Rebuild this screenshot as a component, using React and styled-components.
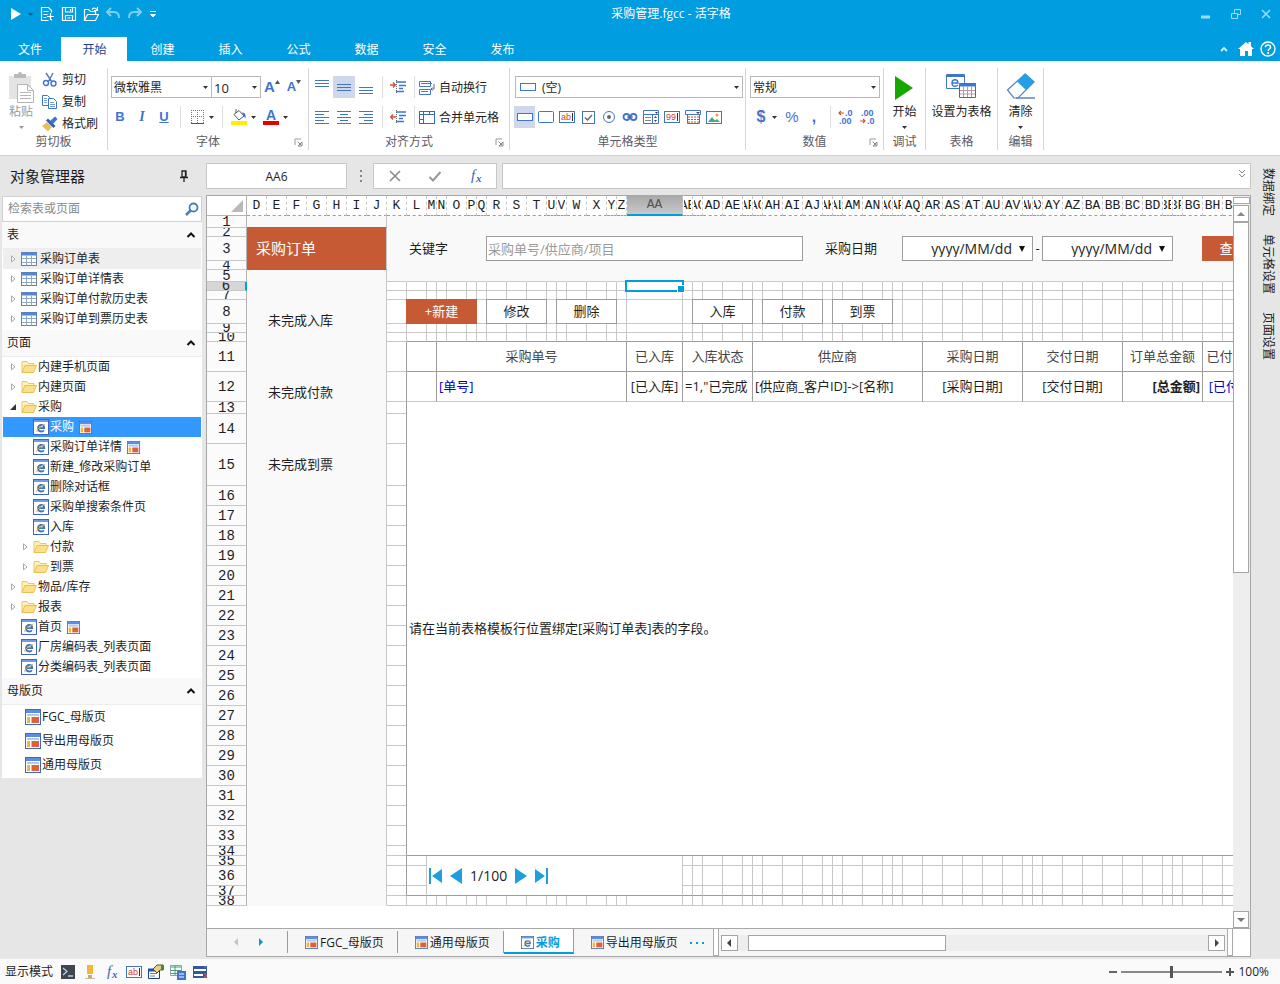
import styled, { createGlobalStyle, css } from 'styled-components';

const colors = {
  brand: '#009de1',
  accent: '#c65a35',
  blue: '#3f74cf',
  panel: '#e6e6e6',
  light: '#f9f9f9',
  line: '#c8c8c8',
  dark: '#9c9c9c',
  text: '#1e1e1e',
};

const GlobalStyle = createGlobalStyle`
  * {
    box-sizing: border-box;
  }
  body {
    margin: 0;
    background: ${colors.panel};
    color: ${colors.text};
    font: 12px/16px 'Open Sans', 'Noto Sans CJK SC', sans-serif;
  }
  button, input, select {
    margin: 0;
    padding: 0;
    border: 0;
    border-radius: 0;
    background: none;
    color: inherit;
    font: inherit;
    outline: none;
  }
  select {
    appearance: none;
  }
  svg {
    display: block;
    flex: none;
  }
  ul {
    margin: 0;
    padding: 0;
    list-style: none;
  }
`;

const St = {
  Page: styled.div`
    display: flex;
    flex-direction: column;
    min-height: 100vh;
  `,

  /* header */
  Header: styled.header`
    background: ${colors.brand};
    color: #fff;
  `,
  TitleRow: styled.div`
    display: flex;
    align-items: center;
    height: 28px;
  `,
  QuickBar: styled.div`
    display: flex;
    align-items: center;
    gap: 6px;
    width: 160px;
    padding-left: 10px;
  `,
  QuickButton: styled.button`
    display: flex;
  `,
  Title: styled.h1`
    flex: 1;
    margin: 0;
    font-size: 12px;
    font-weight: 400;
    text-align: center;
  `,
  WindowControls: styled.div`
    display: flex;
    gap: 20px;
    padding: 0 9px 0 19px;
  `,
  TabRow: styled.nav`
    display: flex;
    align-items: flex-end;
    height: 33px;
  `,
  MenuTab: styled.button`
    width: ${props => (props.$first ? 59 : 66)}px;
    height: 24px;
    margin-right: 2px;
    padding: 2px 0 0 1px;
    background: ${props => (props.$active ? '#fff' : 'transparent')};
    color: ${props => (props.$active ? '#1c3f94' : '#fff')};
  `,
  HeaderTools: styled.div`
    display: flex;
    align-items: center;
    gap: 6px;
    height: 24px;
    margin-left: auto;
    padding-right: 4px;

    & > svg:first-child {
      margin-right: 4px;
    }
  `,

  /* ribbon */
  Ribbon: styled.section`
    display: flex;
    padding: 7px 0 5px;
    border-bottom: 1px solid #cfcfcf;
    background: #fff;
  `,
  Group: styled.div`
    display: flex;
    flex: none;
    flex-direction: column;
    width: ${props => props.$width}px;
    height: 82px;
    border-right: 1px solid #d6d6d6;
  `,
  GroupBody: styled.div`
    flex: 1;
  `,
  GroupLabel: styled.div`
    display: grid;
    grid-template-columns: 1fr auto 1fr;
    align-items: center;
    height: 16px;
    color: #5c5c66;

    & > span {
      grid-column: 2;
      white-space: nowrap;
    }
  `,
  Launcher: styled.button`
    justify-self: end;
    margin-right: 5px;
  `,
  Clipboard: styled.div`
    display: grid;
    grid-template-columns: 42px 1fr;
  `,
  BigButton: styled.button`
    display: grid;
    grid-template-rows: 32px 16px 14px;
    justify-content: center;
    place-items: center;
    width: 100%;
    padding-top: 4px;
    color: ${props => (props.$muted ? '#9a9a9a' : 'inherit')};
    white-space: nowrap;
  `,
  TextButton: styled.button`
    display: flex;
    align-items: center;
    gap: 4px;
    height: 22px;
    padding-top: 1px;
    white-space: nowrap;
  `,
  ToolRow: styled.div`
    display: flex;
    align-items: center;
    height: 22px;
    margin-top: 8px;
    padding-left: ${props => props.$pad}px;
  `,
  IconButton: styled.button`
    display: flex;
    align-items: center;
    justify-content: center;
    width: ${props => props.$width || 22}px;
    height: 22px;
    background: ${props => (props.$active ? '#cfd8ea' : 'transparent')};
    color: ${colors.blue};
    ${props =>
      props.$glyph &&
      css`
        font: ${props.$light ? 400 : 700} ${props.$glyph}px/22px 'Liberation Sans', sans-serif;

        & > svg {
          align-self: flex-start;
          margin-top: 4px;
        }
      `}
    ${props => props.$italic && "font-family: 'Liberation Serif', serif; font-style: italic;"}
    ${props => props.$underline && 'text-decoration: underline;'}
  `,
  SplitButton: styled.button`
    display: flex;
    align-items: center;
    gap: 4px;
    height: 22px;
    padding: 0 3px 0 4px;
  `,
  Spacer: styled.span`
    width: 4px;
  `,
  Sep: styled.span`
    width: 1px;
    height: 22px;
    margin: 0 4px 0 5px;
    background: #dedede;
  `,
  SelectBox: styled.label`
    display: flex;
    align-items: center;
    gap: 6px;
    width: ${props => props.$width}px;
    height: 22px;
    padding: 0 3px 0 ${props => (props.$icon ? 4 : 2)}px;
    border: 1px solid #b9b9b9;
    background: #fff;
    font-size: ${props => props.$size || 12}px;

    & + & {
      border-left: 0;
    }
    select {
      flex: 1;
      min-width: 0;
      height: 20px;
      padding-top: 1px;
    }
  `,

  /* object manager */
  Main: styled.main`
    display: flex;
    flex: 1;
    background: ${colors.panel};
  `,
  Side: styled.aside`
    flex: none;
    width: 206px;
  `,
  SideTitle: styled.h2`
    display: flex;
    align-items: center;
    justify-content: space-between;
    height: 40px;
    margin: 0;
    padding: 0 18px 0 10px;
    font-size: 15px;
    font-weight: 400;
  `,
  SidePanel: styled.div`
    margin: 0 4px 0 2px;
    background: #fff;

    ul {
      padding-bottom: 1px;
    }
  `,
  SearchBox: styled.label`
    display: flex;
    align-items: center;
    height: 26px;
    padding: 0 2px 0 5px;
    border: 1px solid #d0d0d0;

    input {
      flex: 1;
      min-width: 0;
    }
    input::placeholder {
      color: #8a8a8a;
      opacity: 1;
    }
  `,
  SectionHeader: styled.h3`
    display: flex;
    align-items: center;
    justify-content: space-between;
    height: 27px;
    margin: 0;
    padding: 0 6px 0 5px;
    border-bottom: 1px solid #ededed;
    background: ${colors.light};
    font-size: 12px;
    font-weight: 400;
  `,
  TreeItem: styled.li`
    display: flex;
    align-items: center;
    height: 20px;
    margin: 0 1px;
    padding-left: ${props => 6 + (props.$level || 0) * 12}px;
    background: ${props => (props.$selected ? '#3399ff' : props.$hover ? '#eeeeee' : '#fff')};
    color: ${props => (props.$selected ? '#fff' : 'inherit')};

    & > :first-child {
      margin-right: 4px;
    }
    span {
      margin: 0 5px 0 ${props => (props.$table ? 3 : 1)}px;
      white-space: nowrap;
    }
  `,
  NoExpander: styled.i`
    width: 8px;
  `,
  MasterItem: styled.li`
    display: flex;
    align-items: center;
    gap: 1px;
    height: 24px;
    padding-left: 23px;
  `,

  /* formula bar */
  Workspace: styled.section`
    display: flex;
    flex: 1;
    flex-direction: column;
    min-width: 0;
    padding: 7px 0 2px;
  `,
  FormulaBar: styled.div`
    display: flex;
    align-items: center;
    height: 26px;
    margin-bottom: 6px;
  `,
  NameBox: styled.input`
    width: 141px;
    height: 26px;
    border: 1px solid #c6c6c6;
    background: #fff;
    text-align: center;
  `,
  FormulaTools: styled.div`
    display: flex;
    align-items: center;
    gap: 26px;
    width: 124px;
    height: 26px;
    padding-left: 14px;
    border: 1px solid #c6c6c6;
    background: #fff;
  `,
  FormulaInput: styled.label`
    display: flex;
    flex: 1;
    height: 26px;
    margin-left: 5px;
    padding: 5px 4px;
    border: 1px solid #c6c6c6;
    background: #fff;

    input {
      flex: 1;
    }
  `,

  /* sheet */
  Document: styled.div`
    display: flex;
    flex: 1;
    flex-direction: column;
    border: 1px solid #a8a8a8;
    background: #fff;
  `,
  DocumentMain: styled.div`
    display: flex;
    flex: 1;
  `,
  SheetView: styled.div`
    flex: 1;
    min-width: 0;
    overflow: hidden;
  `,
  Table: styled.table`
    width: ${props => props.$width}px;
    border-collapse: separate;
    border-spacing: 0;
    table-layout: fixed;
  `,
  Col: styled.col`
    width: ${props => props.$width}px;
  `,
  Row: styled.tr`
    height: ${props => props.$height}px;
  `,
  Corner: styled.th`
    height: 20px;
    padding: 0 3px 0 24px;
    border-right: 1px solid #b5b5b5;
    border-bottom: 1px solid #b5b5b5;
  `,
  ColHead: styled.th`
    height: 20px;
    padding: 0 1px;
    border-right: 1px dashed ${colors.line};
    border-bottom: ${props => (props.$active ? `2px solid ${colors.brand}` : `1px dashed ${colors.dark}`)};
    background: ${props => (props.$active ? 'linear-gradient(#a9a9a9, #c9c9c9)' : '#fff')};
    color: ${props => (props.$active ? '#555' : 'inherit')};
    font: 13px/16px 'Liberation Mono', monospace;

    & > div {
      display: flex;
      justify-content: center;
      overflow: hidden;
    }
  `,
  RowHead: styled.th`
    padding: 0;
    border-right: ${props => (props.$active ? `2px solid ${colors.brand}` : '1px solid #b5b5b5')};
    border-bottom: 1px solid ${colors.line};
    background: ${props => (props.$active ? '#d6d6d6' : '#fbfbfb')};
    font: 14px/16px 'Liberation Mono', monospace;

    & > div {
      display: flex;
      align-items: center;
      justify-content: center;
      height: ${props => props.$height - 1}px;
      overflow: hidden;
    }
  `,
  Cell: styled.td`
    position: relative;
    padding: ${props => (props.$text ? '0 2px 2px' : 0)};
    border-right: 1px solid ${props => props.$right};
    border-bottom: 1px solid ${props => props.$bottom};
    background: ${props => ({ shade: colors.light, accent: colors.accent })[props.$fill] || '#fff'};
    color: ${props => props.$color || 'inherit'};
    font-size: 13px;
    font-weight: ${props => (props.$bold ? 700 : 400)};
    text-align: ${props => props.$align || 'left'};
    vertical-align: ${props => (props.$top ? 'top' : 'middle')};
    white-space: nowrap;
  `,
  Selection: styled.div`
    position: absolute;
    z-index: 1;
    inset: -2px;
    border: 2px solid ${colors.brand};

    &::after {
      content: '';
      position: absolute;
      right: -3px;
      bottom: -3px;
      width: 6px;
      height: 6px;
      border: 1px solid #fff;
      background: ${colors.brand};
    }
  `,
  MenuTitle: styled.div`
    padding: 0 0 2px 9px;
    color: #fff;
    font-size: 15px;
  `,
  SheetMenu: styled.div`
    display: flex;
    flex-direction: column;
    padding-top: 14px;

    button {
      height: 72px;
      padding-left: 21px;
      text-align: left;
    }
  `,
  KeywordInput: styled.input`
    display: block;
    width: 100%;
    height: 23px;
    padding-left: 1px;
    background: #fff;
    outline: 1px solid ${colors.dark};

    &::placeholder {
      color: #9a9a9a;
      opacity: 1;
    }
  `,
  DateBox: styled.label`
    display: flex;
    align-items: center;
    gap: 6px;
    height: 23px;
    padding-right: 6px;
    background: #fff;
    font-size: 14px;
    outline: 1px solid ${colors.dark};

    select {
      flex: 1;
      min-width: 0;
      text-align-last: right;
    }
  `,
  SheetButton: styled.button`
    display: block;
    width: 100%;
    height: 23px;
    padding-bottom: 2px;
    background: ${props => (props.$primary ? colors.accent : '#fff')};
    color: ${props => (props.$primary ? '#fff' : 'inherit')};
    outline: 1px solid ${props => (props.$primary ? colors.accent : colors.dark)};
  `,
  Pager: styled.div`
    display: flex;
    align-items: center;
    gap: 8px;
    padding-left: 2px;
    font-size: 14px;
  `,

  /* scrollbars and sheet tabs */
  VScroll: styled.div`
    display: flex;
    flex-direction: column;
    width: 17px;
    background: #eeeeee;
  `,
  VSplit: styled.div`
    height: 7px;
    margin: 1px 0;
    border: 1px solid #aaa;
    background: #fff;
  `,
  ScrollButton: styled.button`
    display: flex;
    flex: none;
    align-items: center;
    justify-content: center;
    width: ${props => (props.$small ? 17 : 16)}px;
    height: ${props => (props.$small ? 16 : 17)}px;
    border: 1px solid #a5a5a5;
    background: #fff;
  `,
  VTrack: styled.div`
    flex: 1;
  `,
  VThumb: styled.div`
    width: 16px;
    height: 51%;
    border: 1px solid #a5a5a5;
    background: #fff;
  `,
  SheetTabs: styled.div`
    display: flex;
    height: 28px;
    border-top: 1px solid #a8a8a8;
    background: #f6f6f6;
  `,
  TabNav: styled.div`
    display: flex;
    align-items: center;
    gap: 15px;
    width: 81px;
    height: 22px;
    margin-top: 2px;
    padding-left: 24px;
    border-right: 1px solid ${colors.dark};
  `,
  SheetTab: styled.button`
    display: flex;
    align-items: center;
    gap: 2px;
    height: 22px;
    margin-top: 2px;
    padding: 1px 13px 0 17px;
    border-right: 1px solid ${colors.dark};
    white-space: nowrap;

    &:nth-last-of-type(2) {
      padding-right: 10px;
      border-right: 0;
    }
    ${props =>
      props.$active &&
      css`
        height: 25px;
        margin-top: 0;
        padding-top: 4px;
        border-bottom: 2px solid ${colors.brand};
        background: #fff;
        color: ${colors.brand};
        font-weight: 700;
      `}
  `,
  MoreTabs: styled.button`
    display: flex;
    align-items: center;
    gap: 4px;
    width: 25px;
    padding-left: 2px;

    i {
      width: 2px;
      height: 2px;
      background: ${colors.brand};
    }
  `,
  HSplit: styled.div`
    flex: none;
    width: 6px;
    border: 1px solid #aaa;
    border-top: 0;
    background: #fff;
  `,
  HScroll: styled.div`
    display: flex;
    flex: 1;
    align-items: center;
    padding: 0 2px;
  `,
  HTrack: styled.div`
    flex: 1;
    padding-left: 10px;
    background: #eeeeee;
  `,
  HThumb: styled.div`
    width: 43%;
    height: 16px;
    border: 1px solid #a5a5a5;
    background: #fff;
  `,
  TabsCorner: styled.div`
    flex: none;
    width: 17px;
    background: #fff;
  `,
  Dock: styled.aside`
    display: flex;
    flex: none;
    flex-direction: column;
    align-items: center;
    gap: 18px;
    width: 29px;
    padding: 12px 0 0 5px;

    button {
      text-orientation: sideways;
      writing-mode: vertical-rl;
    }
  `,

  /* status bar */
  Status: styled.footer`
    display: flex;
    align-items: center;
    height: 25px;
    padding: 0 11px 0 5px;
    background: #fafafa;
  `,
  StatusIcons: styled.div`
    display: flex;
    gap: 6px;
    margin-left: 7px;
  `,
  Zoom: styled.div`
    display: flex;
    align-items: center;
    gap: 4px;
    margin-left: auto;

    input {
      width: 101px;
      height: 12px;
      background: linear-gradient(#888, #888) center / 100% 2px no-repeat;
      appearance: none;
    }
    input::-webkit-slider-thumb {
      width: 3px;
      height: 12px;
      background: #555;
      appearance: none;
    }
  `,
};

/* ---------- icons ---------- */

const Svg = ({ w = 16, h = w, box, children }) => (
  <svg width={w} height={h} viewBox={box || `0 0 ${w} ${h}`} fill="none" aria-hidden="true">
    {children}
  </svg>
);

const Caret = ({ color = '#333' }) => (
  <Svg w={5} h={3}>
    <path d="M0 0h5L2.5 3z" fill={color} />
  </Svg>
);

const Triangle = ({ dir = 'right', color = '#444' }) => {
  const d = { right: 'M3 1l4 4-4 4z', left: 'M7 1L3 5l4 4z', up: 'M1 7l4-4 4 4z', down: 'M1 3l4 4 4-4z' };
  return (
    <Svg w={10}>
      <path d={d[dir]} fill={color} />
    </Svg>
  );
};

const PageIcon = ({ size = 16 }) => (
  <Svg w={size} box="0 0 16 16">
    <rect x="0.5" y="0.5" width="15" height="15" fill="#fff" stroke="#3f66c4" />
    <path d="M1 2h14" stroke="#6f9be8" strokeWidth="2" />
    <path d="M5 9.2h6.2c0-2-1.3-3.2-3-3.2S5 7.4 5 9.3s1.4 3.2 3.3 3.2c1.2 0 2-.4 2.6-1.2" stroke="#3f74b8" strokeWidth="1.8" />
    <path d="M4 13c-1-2 3-6 8-7.5" stroke="#e0b040" />
  </Svg>
);

const MasterIcon = ({ size = 16 }) => (
  <Svg w={size} box="0 0 16 16">
    <rect x="0.5" y="0.5" width="15" height="15" fill="#fff" stroke="#3f66c4" />
    <path d="M1 2.5h14" stroke="#5b8fe6" strokeWidth="3" />
    <path d="M2 6h12" stroke="#9ab8e8" strokeWidth="1.5" />
    <path d="M2 8h3v6H2z" fill="#f0b73c" />
    <path d="M6.5 8H14v6H6.5z" fill="#de6238" />
  </Svg>
);

const TableIcon = () => (
  <Svg>
    <rect x="0.5" y="1.5" width="15" height="13" fill="#fff" stroke="#6d7f9c" />
    <path d="M0 3h16" stroke="#4f86d9" strokeWidth="3" />
    <path d="M1 7.5h14M1 11.5h14M5.5 4.5v10M10.5 4.5v10" stroke="#8ea9c0" />
  </Svg>
);

const FolderIcon = () => (
  <Svg>
    <path d="M1 13.5V2.5h5l1.5 2H13v2" fill="#fdf1b8" stroke="#ecc766" />
    <path d="M1 13.5l3-7h11.5l-3 7z" fill="#fbe08b" stroke="#e8bd55" />
  </Svg>
);

const Expander = ({ open }) => (
  <Svg w={8}>
    {open ? <path d="M7 1v6H1z" fill="#333" /> : <path d="M2.5 0.8v6L6 4z" stroke="#a8a8a8" fill="#fff" />}
  </Svg>
);

const Chevron = () => (
  <Svg w={10} h={6}>
    <path d="M1.5 5L5 1.5 8.5 5" stroke="#111" strokeWidth="2" />
  </Svg>
);

const AlignIcon = ({ offset = 2, widths = [14, 14, 14], align = 'center' }) => (
  <Svg>
    {widths.map((w, i) => {
      const x = { left: 1, center: 8 - w / 2, right: 15 - w }[align];
      return <path key={i} d={`M${x} ${offset + i * 3 + 0.5}h${w}`} stroke={colors.blue} />;
    })}
  </Svg>
);

const IndentIcon = ({ out }) => (
  <Svg>
    <path d="M6.5 1v14" stroke="#666" strokeDasharray="1 1" />
    <path d="M6 3h10M9 6.5h7M9 9.5h4M6 12.5h8" stroke={colors.blue} strokeWidth="1.6" />
    <path d={out ? 'M6 8H1M3 5.5L0.8 8 3 10.5' : 'M0 6h5M3 3.5L5.2 6 3 8.5'} stroke="#d4532b" strokeWidth="1.4" />
  </Svg>
);

const WrapIcon = () => (
  <Svg>
    <path d="M.5 1.5h11v5H.5zM.5 9.5h11v5H.5z" stroke={colors.blue} />
    <path d="M2 3.5h11M2 11.5h7" stroke="#d4532b" />
    <path d="M15 4v5h-3M13.5 7.5L12 9l1.5 1.5" stroke="#667" />
  </Svg>
);

const MergeIcon = () => (
  <Svg>
    <rect x="0.5" y="1.5" width="15" height="12" stroke="#3a69b0" />
    <path d="M1 4.5h14M4.5 2v11M10.5 2v2.5M1 9.5h3.5" stroke="#3a69b0" />
  </Svg>
);

const RectIcon = ({ round = 0 }) => (
  <Svg>
    <rect x="0.5" y={round ? 2.5 : 4.5} width="15" height={round ? 11 : 7} rx={round} fill="#fff" stroke={colors.blue} />
  </Svg>
);

const InputIcon = ({ label = 'ab' }) => (
  <Svg>
    <rect x="0.5" y="2.5" width="15" height="11" fill="#fff" stroke={colors.blue} />
    <text x="2" y="11" fontSize="9" fill="#d4422b" fontFamily="Liberation Sans">
      {label}
    </text>
    <path d="M13.5 4v8" stroke="#333" />
  </Svg>
);

const CheckIcon = () => (
  <Svg>
    <rect x="2.5" y="2.5" width="12" height="12" stroke={colors.blue} />
    <path d="M5 8.5l2.5 2.5L12 6" stroke="#667" strokeWidth="1.5" />
  </Svg>
);

const RadioIcon = () => (
  <Svg>
    <circle cx="8" cy="8" r="5.5" stroke={colors.blue} />
    <circle cx="8" cy="8" r="2" fill="#667" />
  </Svg>
);

const LinkIcon = () => (
  <Svg>
    <circle cx="4.5" cy="8" r="3" stroke={colors.blue} strokeWidth="1.8" />
    <circle cx="11.5" cy="8" r="3" stroke={colors.blue} strokeWidth="1.8" />
    <path d="M5 8h6" stroke="#556" />
  </Svg>
);

const ComboIcon = () => (
  <Svg>
    <path d="M.5 1.5h15v4H.5zM.5 5.5v9h9v-9M9.5 5.5h6v9h-6" stroke={colors.blue} />
    <path d="M2 8.5h6M2 11.5h6" stroke="#888" />
    <path d="M11 9h3l-1.5-2zM11 11h3l-1.5 2zM12 3h3l-1.5 2z" fill="#445" />
  </Svg>
);

const CalendarIcon = () => (
  <Svg>
    <path d="M.5 1.5h15v4H.5zM2.5 5.5v9h12v-9" stroke={colors.blue} />
    <path d="M3 8h11M3 10.5h11M3 13h11" stroke="#d4532b" strokeDasharray="2 1" />
    <path d="M11 3h4l-2 2z" fill="#445" />
  </Svg>
);

const ImageIcon = () => (
  <Svg>
    <rect x="0.5" y="2.5" width="15" height="12" fill="#fff" stroke={colors.blue} />
    <path d="M2 13l4-5 3 3.5L11 10l3 3z" fill="#3fae7c" />
    <circle cx="11" cy="6" r="1.5" fill="#e7a23c" />
  </Svg>
);

const DecimalIcon = ({ more }) => (
  <Svg>
    <text x={more ? 7 : 1} y="7" fontSize="9" fontWeight="bold" fill={colors.blue} fontFamily="Liberation Sans">
      {more ? '.0' : '.00'}
    </text>
    <text x={more ? 1 : 7} y="15" fontSize="9" fontWeight="bold" fill={colors.blue} fontFamily="Liberation Sans">
      {more ? '.00' : '.0'}
    </text>
    <path d={more ? 'M6 4H1M3 2L1 4l2 2' : 'M0 12h5M3 10l2 2-2 2'} stroke="#d4532b" strokeWidth="1.2" />
  </Svg>
);

const GrowIcon = ({ down }) => (
  <Svg w={5} h={4}>
    <path d={down ? 'M0 0h5L2.5 4z' : 'M0 4h5L2.5 0z'} fill="#555" />
  </Svg>
);

const ScissorsIcon = () => (
  <Svg>
    <path d="M4 1l6 9M11 1L7 8.5" stroke="#5d7fb8" strokeWidth="1.5" />
    <circle cx="4" cy="11" r="2.5" stroke={colors.blue} strokeWidth="1.4" />
    <circle cx="11.5" cy="11.5" r="2.5" stroke={colors.blue} strokeWidth="1.4" />
    <path d="M6 9.5l2.5-2" stroke={colors.blue} strokeWidth="1.4" />
  </Svg>
);

const CopyIcon = () => (
  <Svg>
    <path d="M.5 1.5h5l2 2v8h-7z" fill="#fff" stroke={colors.blue} />
    <path d="M6.5 4.5h5l3 3v7h-8z" fill="#fff" stroke={colors.blue} />
    <path d="M2 4.5h3M2 6.5h3M2 8.5h3M8 8.5h4M8 10.5h5M8 12.5h5" stroke="#7fa0dc" />
  </Svg>
);

const BrushIcon = () => (
  <Svg>
    <path d="M0 10l5-4 5 5-4 4.500z" fill="#e7bf5d" />
    <path d="M4 4.500l2-2 7.500 7.500-2 2z" fill="#2e5fb5" />
    <path d="M8 5l5-4.500 2.500 2.500L11 8z" fill={colors.blue} />
  </Svg>
);

const PasteIcon = () => (
  <Svg w={26} h={32}>
    <path d="M1 4h22v23H1z" fill="#e4e4e4" />
    <path d="M6 2h4a2 2 0 014 0h4v4H6z" fill="#b9b9b9" />
    <path d="M9.5 12.5h10l6 6v12h-16z" fill="#fff" stroke="#b5b5b5" />
    <path d="M19.5 12.5v6h6M12 20.5h11M12 23.5h11M12 26.5h11" stroke="#b5b5b5" />
  </Svg>
);

const BorderIcon = () => (
  <Svg>
    <path d="M2 1.5h13M2 7.5h13M2.5 1v13M8.5 1v13M14.5 1v13" stroke="#777" strokeDasharray="1 1" />
    <path d="M2 14.5h13" stroke="#555" />
  </Svg>
);

const FillIcon = () => (
  <Svg h={18}>
    <path d="M3 6.5l5-4 5 5.5-5 4z" fill="#fff" stroke="#556" />
    <path d="M5 1v4" stroke="#556" />
    <path d="M11 4.5c3 0 4 2 3.5 6-1-1-2-3-3.5-6z" fill={colors.blue} />
    <path d="M0 13h16v4H0z" fill="#ffee00" />
  </Svg>
);

const FontColorIcon = () => (
  <Svg h={18}>
    <text x="3" y="12" fontSize="14" fontWeight="bold" fill={colors.blue} fontFamily="Liberation Sans">
      A
    </text>
    <path d="M0 13h16v4H0z" fill="#e60000" />
  </Svg>
);

const LauncherIcon = () => (
  <Svg w={9}>
    <path d="M1 7V1h6" stroke="#999" />
    <path d="M3.5 3.5L7 7M8 4v4H4z" stroke="#888" />
  </Svg>
);

const PlayBig = () => (
  <Svg w={20} h={26}>
    <path d="M1 1l18 12L1 25z" fill="#16a800" />
  </Svg>
);

const SetTableIcon = () => (
  <Svg w={32} h={30}>
    <path d="M1.5 1.5h18v14h-18z" fill="#fff" stroke={colors.blue} />
    <path d="M1 3h19" stroke={colors.blue} strokeWidth="2" />
    <path d="M7 10h6c0-2-1.2-3.3-3-3.3S7 8 7 10s1.3 3.3 3.2 3.3c1.2 0 2-.4 2.6-1.2" stroke={colors.blue} strokeWidth="1.4" />
    <path d="M14.5 10.5h16v14h-16z" fill="#fff" stroke="#666" />
    <path d="M14 12h17" stroke={colors.blue} strokeWidth="3" />
    <path d="M15 17.5h15M15 21h15M18.5 14v10M22.5 14v10M26.5 14v10" stroke="#b898a8" />
  </Svg>
);

const EraserIcon = () => (
  <Svg w={30} h={32}>
    <path d="M1.5 18L19 2l9 8-16 16H8z" fill="#fff" stroke="#5582c8" strokeWidth="1.2" />
    <path d="M11 9.5L19.5 1.5l9 8-8.5 8.5z" fill="#25a0e6" />
    <path d="M10 26h19" stroke="#5582c8" strokeWidth="1.5" />
  </Svg>
);

const FxIcon = () => (
  <Svg>
    <text x="3" y="12" fontSize="15" fontStyle="italic" fill="#3d68b5" fontFamily="Liberation Serif">
      f
    </text>
    <text x="8" y="14" fontSize="11" fontStyle="italic" fontWeight="bold" fill="#3d68b5" fontFamily="Liberation Serif">
      x
    </text>
  </Svg>
);

/* ---------- header ---------- */

const quickActions = [
  { label: '新建', d: 'M2.5 1.5h7l3 3v2M2.5 1v13.5h7M12.5 13v1.5M4.5 5.5h5M4.5 8.5h4M4.5 11.5h3M11.5 7v7M8 10.5h7' },
  { label: '保存', d: 'M1.5 1.5h13v13h-13zM4.5 2v4h7V2M4.5 14.5v-5h7v5M9.5 3v2M6.5 12h3' },
  { label: '打开', d: 'M1.5 14.5v-11h4l2 2h5v3M1.5 14.5l3-6h11l-3 6zM9 3.5c2-2 4-1.5 5 .5M14.5 1v3.5H11' },
  { label: '撤销', d: 'M6 2L2 6l4 4M2 6h7c4 0 5 2 5 6', faded: true },
  { label: '重做', d: 'M10 2l4 4-4 4M14 6H7c-4 0-5 2-5 6', faded: true },
];

const AppHeader = () => (
  <St.Header>
    <St.TitleRow>
      <St.QuickBar>
        <St.QuickButton aria-label="运行">
          <Svg w={12} h={14}>
            <path d="M1 1l10 6-10 6z" fill="#fff" />
          </Svg>
        </St.QuickButton>
        <Caret color="#0b5a86" />
        {quickActions.map(item => (
          <St.QuickButton key={item.label} aria-label={item.label}>
            <Svg>
              <path d={item.d} stroke={item.faded ? '#7fcdf1' : '#fff'} strokeWidth={item.faded ? 2 : 1.2} />
            </Svg>
          </St.QuickButton>
        ))}
        <Svg w={8} h={8}>
          <path d="M1 1.5h6M1.5 4.5h5L4 7z" stroke="#fff" fill="#fff" />
        </Svg>
      </St.QuickBar>
      <St.Title>采购管理.fgcc - 活字格</St.Title>
      <St.WindowControls>
        <button aria-label="最小化">
          <Svg w={10}>
            <path d="M0 8h9" stroke="#9bdcff" strokeWidth="3" />
          </Svg>
        </button>
        <button aria-label="还原">
          <Svg w={10}>
            <path d="M.5 4.5h6v5h-6zM3.5 4V.5h6v5H7" stroke="#9bdcff" />
          </Svg>
        </button>
        <button aria-label="关闭">
          <Svg w={10}>
            <path d="M1 1l8 8M9 1L1 9" stroke="#9bdcff" strokeWidth="1.5" />
          </Svg>
        </button>
      </St.WindowControls>
    </St.TitleRow>
    <St.TabRow>
      {['文件', '开始', '创建', '插入', '公式', '数据', '安全', '发布'].map((name, i) => (
        <St.MenuTab key={name} $active={i === 1} $first={i === 0}>
          {name}
        </St.MenuTab>
      ))}
      <St.HeaderTools>
        <Svg w={8} h={6}>
          <path d="M1 5l3-3 3 3" stroke="#d5f0ff" strokeWidth="1.8" />
        </Svg>
        <Svg>
          <path d="M0 8l8-7 2.5 2.2V1H13v4.3L16 8h-2v7h-4v-5H7v5H2V8z" fill="#fff" />
        </Svg>
        <Svg>
          <circle cx="8" cy="8" r="7" stroke="#fff" strokeWidth="1.4" />
          <path d="M5.5 6.2C5.5 3.4 10.5 3.4 10.5 6.2c0 1.8-2.4 1.8-2.4 3.8M8.1 11v2" stroke="#fff" strokeWidth="1.5" />
        </Svg>
      </St.HeaderTools>
    </St.TabRow>
  </St.Header>
);

/* ---------- ribbon ---------- */

const RibbonGroup = ({ label, width, launcher, children }) => (
  <St.Group $width={width}>
    <St.GroupBody>{children}</St.GroupBody>
    <St.GroupLabel>
      <span>{label}</span>
      {launcher && (
        <St.Launcher aria-label={`${label}设置`}>
          <LauncherIcon />
        </St.Launcher>
      )}
    </St.GroupLabel>
  </St.Group>
);

const Select = ({ label, value, width, size, icon }) => (
  <St.SelectBox $width={width} $size={size} $icon={Boolean(icon)}>
    {icon}
    <select aria-label={label} defaultValue={value}>
      <option>{value}</option>
    </select>
    <Caret />
  </St.SelectBox>
);

const cellTypes = [
  { label: '空', icon: <RectIcon /> },
  { label: '按钮', icon: <RectIcon round={1} /> },
  { label: '文本框', icon: <InputIcon /> },
  { label: '复选框', icon: <CheckIcon /> },
  { label: '单选框', icon: <RadioIcon /> },
  { label: '超链接', icon: <LinkIcon /> },
  { label: '组合框', icon: <ComboIcon /> },
  { label: '数字', icon: <InputIcon label="99" /> },
  { label: '日期', icon: <CalendarIcon /> },
  { label: '图片', icon: <ImageIcon /> },
];

const Ribbon = () => (
  <St.Ribbon>
    <RibbonGroup label="剪切板" width={108}>
      <St.Clipboard>
        <St.BigButton $muted>
          <PasteIcon />
          粘贴
          <Caret color="#999" />
        </St.BigButton>
        <div>
          <St.TextButton>
            <ScissorsIcon />
            剪切
          </St.TextButton>
          <St.TextButton>
            <CopyIcon />
            复制
          </St.TextButton>
          <St.TextButton>
            <BrushIcon />
            格式刷
          </St.TextButton>
        </div>
      </St.Clipboard>
    </RibbonGroup>
    <RibbonGroup label="字体" width={201} launcher>
      <St.ToolRow $pad={3}>
        <Select label="字体" value="微软雅黑" width={101} />
        <Select label="字号" value="10" width={49} size={13} />
        <St.IconButton $glyph={15}>
          A
          <GrowIcon />
        </St.IconButton>
        <St.IconButton $glyph={13}>
          A
          <GrowIcon down />
        </St.IconButton>
      </St.ToolRow>
      <St.ToolRow $pad={1}>
        <St.IconButton $glyph={13}>B</St.IconButton>
        <St.IconButton $glyph={14} $italic>
          I
        </St.IconButton>
        <St.IconButton $glyph={13} $underline>
          U
        </St.IconButton>
        <St.Sep />
        <St.SplitButton aria-label="边框">
          <BorderIcon />
          <Caret />
        </St.SplitButton>
        <St.Sep />
        <St.SplitButton aria-label="填充颜色">
          <FillIcon />
          <Caret />
        </St.SplitButton>
        <St.SplitButton aria-label="字体颜色">
          <FontColorIcon />
          <Caret />
        </St.SplitButton>
      </St.ToolRow>
    </RibbonGroup>
    <RibbonGroup label="对齐方式" width={201} launcher>
      <St.ToolRow $pad={2}>
        <St.IconButton aria-label="顶端对齐">
          <AlignIcon offset={1} />
        </St.IconButton>
        <St.IconButton aria-label="垂直居中" $active>
          <AlignIcon offset={5} />
        </St.IconButton>
        <St.IconButton aria-label="底端对齐">
          <AlignIcon offset={8} />
        </St.IconButton>
        <St.Sep />
        <St.IconButton aria-label="增加缩进">
          <IndentIcon />
        </St.IconButton>
        <St.Sep />
        <St.TextButton>
          <WrapIcon />
          自动换行
        </St.TextButton>
      </St.ToolRow>
      <St.ToolRow $pad={2}>
        <St.IconButton aria-label="左对齐">
          <AlignIcon widths={[14, 9, 14, 9, 14]} align="left" />
        </St.IconButton>
        <St.IconButton aria-label="居中">
          <AlignIcon widths={[14, 8, 14, 8, 14]} />
        </St.IconButton>
        <St.IconButton aria-label="右对齐">
          <AlignIcon widths={[14, 9, 14, 9, 14]} align="right" />
        </St.IconButton>
        <St.Sep />
        <St.IconButton aria-label="减少缩进">
          <IndentIcon out />
        </St.IconButton>
        <St.Sep />
        <St.TextButton>
          <MergeIcon />
          合并单元格
        </St.TextButton>
      </St.ToolRow>
    </RibbonGroup>
    <RibbonGroup label="单元格类型" width={236}>
      <St.ToolRow $pad={5}>
        <Select label="单元格类型" value="(空)" width={228} icon={<RectIcon />} />
      </St.ToolRow>
      <St.ToolRow $pad={4}>
        {cellTypes.map((type, i) => (
          <St.IconButton key={type.label} aria-label={type.label} $active={i === 0} $width={21}>
            {type.icon}
          </St.IconButton>
        ))}
      </St.ToolRow>
    </RibbonGroup>
    <RibbonGroup label="数值" width={138} launcher>
      <St.ToolRow $pad={4}>
        <Select label="数值格式" value="常规" width={130} />
      </St.ToolRow>
      <St.ToolRow $pad={4}>
        <St.IconButton $glyph={16}>$</St.IconButton>
        <Caret />
        <St.Spacer />
        <St.IconButton $glyph={15} $light>
          %
        </St.IconButton>
        <St.IconButton $glyph={16}>,</St.IconButton>
        <St.Sep />
        <St.IconButton aria-label="增加小数位">
          <DecimalIcon more />
        </St.IconButton>
        <St.IconButton aria-label="减少小数位">
          <DecimalIcon />
        </St.IconButton>
      </St.ToolRow>
    </RibbonGroup>
    <RibbonGroup label="调试" width={42}>
      <St.BigButton>
        <PlayBig />
        开始
        <Caret />
      </St.BigButton>
    </RibbonGroup>
    <RibbonGroup label="表格" width={72}>
      <St.BigButton>
        <SetTableIcon />
        设置为表格
      </St.BigButton>
    </RibbonGroup>
    <RibbonGroup label="编辑" width={46}>
      <St.BigButton>
        <EraserIcon />
        清除
        <Caret />
      </St.BigButton>
    </RibbonGroup>
  </St.Ribbon>
);

/* ---------- object manager ---------- */

const tables = ['采购订单表', '采购订单详情表', '采购订单付款历史表', '采购订单到票历史表'];

const pages = [
  { name: '内建手机页面', type: 'folder' },
  { name: '内建页面', type: 'folder' },
  { name: '采购', type: 'folder', open: true },
  { name: '采购', level: 1, selected: true, master: true },
  { name: '采购订单详情', level: 1, master: true },
  { name: '新建_修改采购订单', level: 1 },
  { name: '删除对话框', level: 1 },
  { name: '采购单搜索条件页', level: 1 },
  { name: '入库', level: 1 },
  { name: '付款', type: 'folder', level: 1 },
  { name: '到票', type: 'folder', level: 1 },
  { name: '物品/库存', type: 'folder' },
  { name: '报表', type: 'folder' },
  { name: '首页', master: true },
  { name: '厂房编码表_列表页面' },
  { name: '分类编码表_列表页面' },
];

const SectionHeader = ({ children }) => (
  <St.SectionHeader>
    {children}
    <Chevron />
  </St.SectionHeader>
);

const ObjectManager = () => (
  <St.Side>
    <St.SideTitle>
      对象管理器
      <Svg w={8} h={13}>
        <path d="M2 1h4v6H2zM0 7.5h8M4 8v4M5.5 1v6" stroke="#222" strokeWidth="1.3" />
      </Svg>
    </St.SideTitle>
    <St.SidePanel>
      <St.SearchBox>
        <input aria-label="检索" placeholder="检索表或页面" />
        <Svg w={14}>
          <circle cx="8.5" cy="5.5" r="4" stroke="#3f7fc0" strokeWidth="1.8" />
          <path d="M5.5 8.5L1 13" stroke="#3f7fc0" strokeWidth="2.5" />
        </Svg>
      </St.SearchBox>
      <SectionHeader>表</SectionHeader>
      <ul>
        {tables.map((name, i) => (
          <St.TreeItem key={name} $hover={i === 0} $table>
            <Expander />
            <TableIcon />
            <span>{name}</span>
          </St.TreeItem>
        ))}
      </ul>
      <SectionHeader>页面</SectionHeader>
      <ul>
        {pages.map((page, i) => (
          <St.TreeItem key={i} $level={page.level} $selected={page.selected}>
            {page.type === 'folder' ? <Expander open={page.open} /> : <St.NoExpander />}
            {page.type === 'folder' ? <FolderIcon /> : <PageIcon />}
            <span>{page.name}</span>
            {page.master && <MasterIcon size={13} />}
          </St.TreeItem>
        ))}
      </ul>
      <SectionHeader>母版页</SectionHeader>
      <ul>
        {['FGC_母版页', '导出用母版页', '通用母版页'].map(name => (
          <St.MasterItem key={name}>
            <MasterIcon />
            <span>{name}</span>
          </St.MasterItem>
        ))}
      </ul>
    </St.SidePanel>
  </St.Side>
);

/* ---------- sheet ---------- */

const toName = n => (n > 26 ? String.fromCharCode(64 + Math.floor((n - 1) / 26)) : '') + String.fromCharCode(65 + ((n - 1) % 26));
const toNumber = name => [...name].reduce((sum, c) => sum * 26 + c.charCodeAt(0) - 64, 0);

const FIRST_COL = toNumber('D');
const LAST_COL = toNumber('BJ');
const COL_K = toNumber('K');
const NARROW = 'M N P Q U V Y Z AB AC AF AG AK AL AO AP AW AX BE BF'.split(' ');

const columns = Array.from({ length: LAST_COL - FIRST_COL + 1 }, (_, i) => {
  const name = toName(FIRST_COL + i);
  return { name, width: name === 'AA' ? 56 : NARROW.includes(name) ? 10 : 20 };
});
const rowHeights = [12, 9, 24, 9, 12, 9, 9, 24, 9, 9, 30, 30, 12, 30, 42, ...Array(18).fill(20), 10, 10, 20, 10, 10];
const sheetWidth = columns.reduce((sum, col) => sum + col.width, 40);

const DateBox = ({ label }) => (
  <St.DateBox>
    <select aria-label={label} defaultValue="yyyy/MM/dd">
      <option>yyyy/MM/dd</option>
    </select>
    <Svg w={8} h={6}>
      <path d="M1 0h6L4 6z" fill="#111" />
    </Svg>
  </St.DateBox>
);

const Pager = () => (
  <St.Pager>
    <button aria-label="首页">
      <Svg w={13} h={16}>
        <path d="M0 0h2v16H0zM13 1v14L3 8z" fill="#1d9ee0" />
      </Svg>
    </button>
    <button aria-label="上一页">
      <Svg w={12} h={16}>
        <path d="M12 0v16L0 8z" fill="#1d9ee0" />
      </Svg>
    </button>
    <span>1/100</span>
    <button aria-label="下一页">
      <Svg w={12} h={16}>
        <path d="M0 0v16l12-8z" fill="#1d9ee0" />
      </Svg>
    </button>
    <button aria-label="末页">
      <Svg w={13} h={16}>
        <path d="M11 0h2v16h-2zM0 1v14l10-7z" fill="#1d9ee0" />
      </Svg>
    </button>
  </St.Pager>
);

const HEAD = '#444';
const FIELD = '#0000c8';

const merges = [
  { ref: 'D1:J1', fill: 'shade', content: null },
  { ref: 'D2:J4', fill: 'accent', content: <St.MenuTitle>采购订单</St.MenuTitle> },
  {
    ref: 'D5:J38',
    fill: 'shade',
    top: true,
    content: (
      <St.SheetMenu>
        <button>未完成入库</button>
        <button>未完成付款</button>
        <button>未完成到票</button>
      </St.SheetMenu>
    ),
  },
  { ref: 'L3:P3', content: '关键字' },
  { ref: 'R3:AI3', content: <St.KeywordInput aria-label="关键字" placeholder="采购单号/供应商/项目" /> },
  { ref: 'AK3:AP3', content: '采购日期' },
  { ref: 'AQ3:AW3', content: <DateBox label="开始日期" /> },
  { ref: 'AX3:AX3', align: 'center', content: '-' },
  { ref: 'AY3:BE3', content: <DateBox label="结束日期" /> },
  { ref: 'BH3:BJ3', content: <St.SheetButton $primary>查询</St.SheetButton> },
  { ref: 'L8:P8', content: <St.SheetButton $primary>+新建</St.SheetButton> },
  { ref: 'R8:T8', content: <St.SheetButton>修改</St.SheetButton> },
  { ref: 'V8:Y8', content: <St.SheetButton>删除</St.SheetButton> },
  { ref: 'AC8:AF8', content: <St.SheetButton>入库</St.SheetButton> },
  { ref: 'AH8:AJ8', content: <St.SheetButton>付款</St.SheetButton> },
  { ref: 'AL8:AO8', content: <St.SheetButton>到票</St.SheetButton> },
  { ref: 'L11:M11', content: null },
  { ref: 'N11:Z11', align: 'center', color: HEAD, content: '采购单号' },
  { ref: 'AA11:AA11', align: 'center', color: HEAD, content: '已入库' },
  { ref: 'AB11:AF11', align: 'center', color: HEAD, content: '入库状态' },
  { ref: 'AG11:AQ11', align: 'center', color: HEAD, content: '供应商' },
  { ref: 'AR11:AV11', align: 'center', color: HEAD, content: '采购日期' },
  { ref: 'AW11:BB11', align: 'center', color: HEAD, content: '交付日期' },
  { ref: 'BC11:BG11', align: 'center', color: HEAD, content: '订单总金额' },
  { ref: 'BH11:BJ11', align: 'center', color: HEAD, content: '已付金额' },
  { ref: 'L12:M12', content: null },
  { ref: 'N12:Z12', color: FIELD, content: '[单号]' },
  { ref: 'AA12:AA12', align: 'center', content: '[已入库]' },
  { ref: 'AB12:AF12', content: '=1,"已完成' },
  { ref: 'AG12:AQ12', content: '[供应商_客户ID]->[名称]' },
  { ref: 'AR12:AV12', align: 'center', content: '[采购日期]' },
  { ref: 'AW12:BB12', align: 'center', content: '[交付日期]' },
  { ref: 'BC12:BG12', align: 'right', bold: true, content: '[总金额]' },
  { ref: 'BH12:BJ12', align: 'center', color: FIELD, content: '[已付款]' },
  { ref: 'L13:BJ34', content: '请在当前表格模板行位置绑定[采购订单表]表的字段。' },
  { ref: 'M35:AA37', content: <Pager /> },
].map(item => {
  const [, c1, r1, c2, r2] = item.ref.match(/([A-Z]+)(\d+):([A-Z]+)(\d+)/);
  return { ...item, c1: toNumber(c1), r1: Number(r1), c2: toNumber(c2), r2: Number(r2) };
});

const rightLine = (row, endCol) => {
  if (endCol < COL_K) return colors.line;
  if (row <= 5) return colors.light;
  if (row < 11 || row > 37) return colors.line;
  return endCol === COL_K || row < 13 ? colors.dark : colors.line;
};

const bottomLine = (endRow, endCol) => {
  if (endCol < COL_K) return endRow < 5 ? colors.accent : colors.light;
  if (endRow < 5) return colors.light;
  return endCol > COL_K && [10, 11, 34, 37].includes(endRow) ? colors.dark : colors.line;
};

const SheetCell = ({ col, row }) => {
  const merge = merges.find(m => col >= m.c1 && col <= m.c2 && row >= m.r1 && row <= m.r2);
  const shade = row <= 5 ? 'shade' : undefined;

  if (!merge) {
    return (
      <St.Cell $right={rightLine(row, col)} $bottom={bottomLine(row, col)} $fill={shade}>
        {row === 6 && toName(col) === 'AA' && <St.Selection />}
      </St.Cell>
    );
  }
  if (merge.c1 !== col || merge.r1 !== row) return null;
  return (
    <St.Cell
      colSpan={merge.c2 - merge.c1 + 1}
      rowSpan={merge.r2 - merge.r1 + 1}
      $right={rightLine(row, merge.c2)}
      $bottom={bottomLine(merge.r2, merge.c2)}
      $fill={merge.fill || shade}
      $align={merge.align}
      $top={merge.top}
      $text={typeof merge.content === 'string'}
      $color={merge.color}
      $bold={merge.bold}
    >
      {merge.content}
    </St.Cell>
  );
};

const Sheet = () => (
  <St.SheetView>
    <St.Table $width={sheetWidth}>
      <colgroup>
        <St.Col $width={40} />
        {columns.map(col => (
          <St.Col key={col.name} $width={col.width} />
        ))}
      </colgroup>
      <thead>
        <tr>
          <St.Corner aria-label="全选">
            <Svg w={12}>
              <path d="M12 0v12H0z" fill="#b9b9b9" />
            </Svg>
          </St.Corner>
          {columns.map(col => (
            <St.ColHead key={col.name} $active={col.name === 'AA'}>
              <div>{col.name}</div>
            </St.ColHead>
          ))}
        </tr>
      </thead>
      <tbody>
        {rowHeights.map((height, i) => (
          <St.Row key={i} $height={height}>
            <St.RowHead $height={height} $active={i === 5}>
              <div>{i + 1}</div>
            </St.RowHead>
            {columns.map((col, j) => (
              <SheetCell key={col.name} col={FIRST_COL + j} row={i + 1} />
            ))}
          </St.Row>
        ))}
      </tbody>
    </St.Table>
  </St.SheetView>
);

const Workspace = () => (
  <St.Workspace>
    <St.FormulaBar>
      <St.NameBox aria-label="名称框" defaultValue="AA6" />
      <Svg w={26} h={12}>
        <path d="M13 1h2M13 6h2M13 11h2" stroke="#888" strokeWidth="2" />
      </Svg>
      <St.FormulaTools>
        <button aria-label="取消">
          <Svg w={14}>
            <path d="M2 2l10 10M12 2L2 12" stroke="#8b8b8b" strokeWidth="1.6" />
          </Svg>
        </button>
        <button aria-label="确认">
          <Svg w={14}>
            <path d="M1.5 8l3.5 3.5L12.5 3" stroke="#999" strokeWidth="2" />
          </Svg>
        </button>
        <button aria-label="函数">
          <FxIcon />
        </button>
      </St.FormulaTools>
      <St.FormulaInput>
        <input aria-label="公式" />
        <Svg w={8} h={9}>
          <path d="M1 1l3 3 3-3M1 5l3 3 3-3" stroke="#888" />
        </Svg>
      </St.FormulaInput>
    </St.FormulaBar>
    <St.Document>
      <St.DocumentMain>
        <Sheet />
        <St.VScroll>
          <St.VSplit />
          <St.ScrollButton aria-label="向上滚动">
            <Triangle dir="up" color="#888" />
          </St.ScrollButton>
          <St.VTrack>
            <St.VThumb />
          </St.VTrack>
          <St.ScrollButton aria-label="向下滚动">
            <Triangle dir="down" color="#777" />
          </St.ScrollButton>
        </St.VScroll>
      </St.DocumentMain>
      <St.SheetTabs>
        <St.TabNav>
          <button aria-label="上一个">
            <Triangle dir="left" color="#c4c4c4" />
          </button>
          <button aria-label="下一个">
            <Triangle color="#0c94d6" />
          </button>
        </St.TabNav>
        <St.SheetTab>
          <MasterIcon size={13} />
          FGC_母版页
        </St.SheetTab>
        <St.SheetTab>
          <MasterIcon size={13} />
          通用母版页
        </St.SheetTab>
        <St.SheetTab $active>
          <PageIcon size={13} />
          采购
        </St.SheetTab>
        <St.SheetTab>
          <MasterIcon size={13} />
          导出用母版页
        </St.SheetTab>
        <St.MoreTabs aria-label="更多">
          <i />
          <i />
          <i />
        </St.MoreTabs>
        <St.HSplit />
        <St.HScroll>
          <St.ScrollButton aria-label="向左滚动" $small>
            <Triangle dir="left" />
          </St.ScrollButton>
          <St.HTrack>
            <St.HThumb />
          </St.HTrack>
          <St.ScrollButton aria-label="向右滚动" $small>
            <Triangle />
          </St.ScrollButton>
        </St.HScroll>
        <St.HSplit />
        <St.TabsCorner />
      </St.SheetTabs>
    </St.Document>
  </St.Workspace>
);

/* ---------- status bar ---------- */

const StatusBar = () => (
  <St.Status>
    显示模式
    <St.StatusIcons>
      <button aria-label="命令">
        <Svg>
          <path d="M1 1h14v14H1z" fill="#3e4650" />
          <path d="M3 4l4 3.5L3 11M8 12h5" stroke="#b9d3e6" strokeWidth="1.3" />
        </Svg>
      </button>
      <button aria-label="提示">
        <Svg>
          <path d="M5 1h6v9H5z" fill="#f2b92e" />
          <path d="M6 11h4v3H6z" fill="#e0a93c" />
          <path d="M3 14.5h10" stroke="#bbb" />
        </Svg>
      </button>
      <button aria-label="公式">
        <FxIcon />
      </button>
      <button aria-label="文本">
        <InputIcon />
      </button>
      <button aria-label="属性">
        <Svg>
          <path d="M.5 5.5h11v9H.5z" fill="#fff" stroke="#1d3f8c" />
          <path d="M0 6h12" stroke="#1d4fb0" strokeWidth="3" />
          <path d="M2 9.5h7M2 12h5" stroke="#4f86d9" />
          <path d="M5 5l4-4h6v5h-3l-3 3z" fill="#e8cf87" stroke="#5a5230" />
          <path d="M13 1h3v5h-3z" fill="#3c8b4b" />
        </Svg>
      </button>
      <button aria-label="数据">
        <Svg>
          <path d="M.5 1.5h11v10H.5z" fill="#fff" stroke="#8aa8a0" />
          <path d="M1 3h10M1 6.5h10M1 9.5h10M5 2v9" stroke="#3f9c74" />
          <path d="M7 7h9v9H7z" fill="#3f74cf" />
          <path d="M9 10h5M9 13h5" stroke="#fff" />
        </Svg>
      </button>
      <button aria-label="布局">
        <Svg>
          <path d="M1 2h14v12H1z" fill="#31599e" />
          <path d="M2 6h12M2 11h9" stroke="#fff" strokeWidth="2" />
          <path d="M12 3h2M12 10h2v3h-2" stroke="#e05a3c" />
        </Svg>
      </button>
    </St.StatusIcons>
    <St.Zoom>
      <button aria-label="缩小">
        <Svg w={8}>
          <path d="M0 4h8" stroke="#666" strokeWidth="2" />
        </Svg>
      </button>
      <input type="range" aria-label="缩放" defaultValue="49" />
      <button aria-label="放大">
        <Svg w={8}>
          <path d="M0 4h8M4 0v8" stroke="#555" strokeWidth="2" />
        </Svg>
      </button>
      <span>100%</span>
    </St.Zoom>
  </St.Status>
);

const App = () => (
  <St.Page>
    <GlobalStyle />
    <AppHeader />
    <Ribbon />
    <St.Main>
      <ObjectManager />
      <Workspace />
      <St.Dock>
        <button>数据绑定</button>
        <button>单元格设置</button>
        <button>页面设置</button>
      </St.Dock>
    </St.Main>
    <StatusBar />
  </St.Page>
);

export default App;
